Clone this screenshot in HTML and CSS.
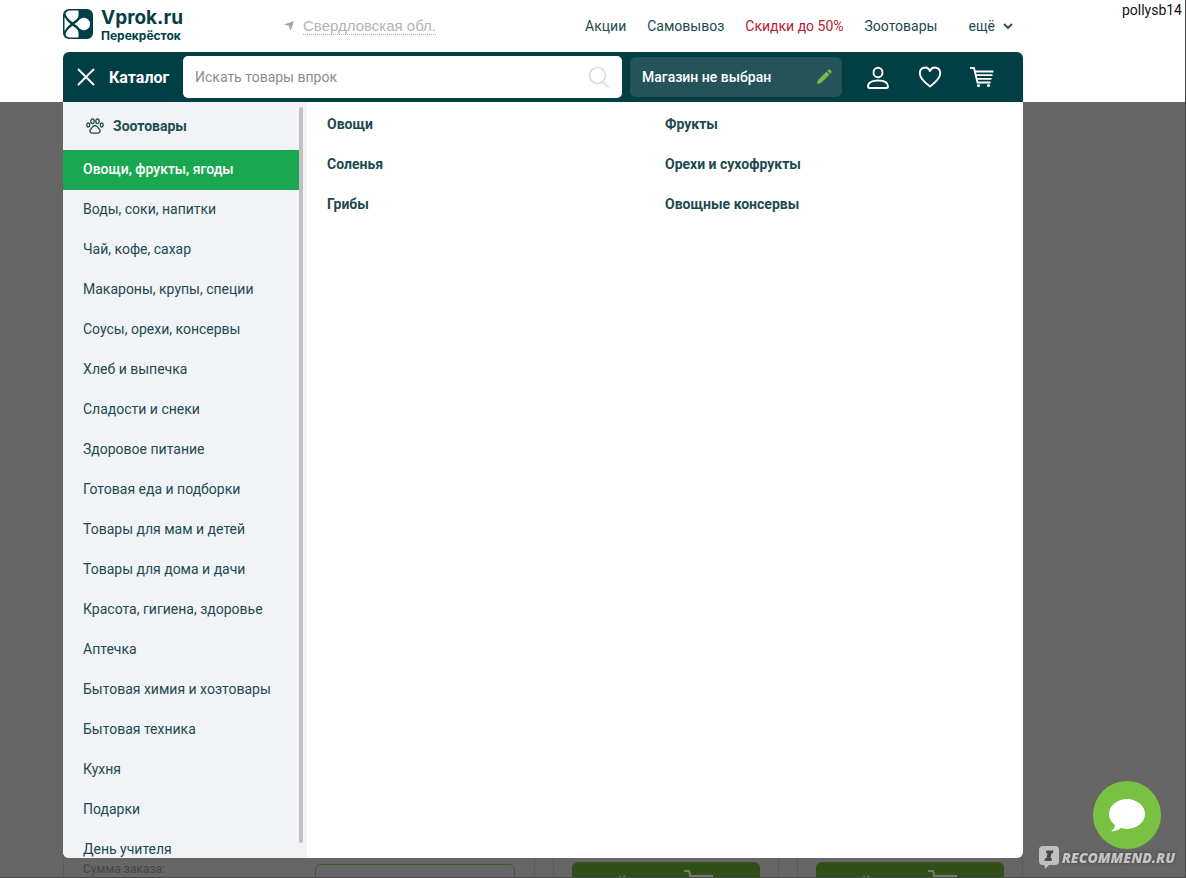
FILE: index.html
```html
<!DOCTYPE html>
<html lang="ru">
<head>
<meta charset="utf-8">
<title>Vprok.ru Перекрёсток</title>
<link rel="stylesheet" href="styles.css">
</head>
<body>
<div class="page">
  <span class="user-tag">pollysb14</span>
  <header class="header">
    <div class="topbar">
      <a class="logo" href="#">
        <svg class="logo-mark" viewBox="0 0 30 30" aria-hidden="true">
          <rect width="30" height="30" rx="6" fill="#023f45"/>
          <path d="M1.500 8Q4 12.500 7.500 15Q4 17.500 1.500 22Z" fill="#fff"/>
          <path d="M7 1.500H15.500V6Q15.500 10 9.500 13.200Q4 9.500 2.500 5Q3 1.500 7 1.500Z" fill="#fff"/>
          <path d="M7 28.500H15.500V24Q15.500 20 9.500 16.800Q4 20.500 2.500 25Q3 28.500 7 28.500Z" fill="#fff"/>
          <path d="M11.500 15Q14.500 13.500 16 11A6.300 6.300 0 1 1 16 19Q14.500 16.500 11.500 15Z" fill="#fff"/>
        </svg>
        <span class="logo-text">
          <span class="logo-name">Vprok.ru</span>
          <span class="logo-sub">Перекрёсток</span>
        </span>
      </a>
      <a class="region" href="#">
        <svg class="region-icon" viewBox="0 0 10 10" aria-hidden="true"><path d="M10 0L6.500 10L5 5L0 3.500Z" fill="#a5a5a5"/></svg>
        <span class="region-name">Свердловская обл.</span>
      </a>
      <nav class="nav">
        <a class="nav-link" href="#">Акции</a>
        <a class="nav-link" href="#">Самовывоз</a>
        <a class="nav-link nav-sale" href="#">Скидки до 50%</a>
        <a class="nav-link" href="#">Зоотовары</a>
        <button class="nav-more" type="button">ещё
          <svg class="chevron" viewBox="0 0 10 6" aria-hidden="true"><path d="M1 1L5 5L9 1" fill="none" stroke="#1d4a50" stroke-width="1.800"/></svg>
        </button>
      </nav>
    </div>
    <div class="toolbar">
      <button class="catalog-btn" type="button">
        <svg class="close-icon" viewBox="0 0 18 18" aria-hidden="true"><path d="M1.500 1.500L16.500 16.500M16.500 1.500L1.500 16.500" stroke="#fff" stroke-width="1.900" stroke-linecap="round"/></svg>
        Каталог
      </button>
      <form class="search">
        <input class="search-input" type="text" placeholder="Искать товары впрок" aria-label="Искать товары впрок">
        <button class="search-btn" type="button" aria-label="Найти">
          <svg viewBox="0 0 22 22" aria-hidden="true"><circle cx="9.500" cy="9.500" r="8" fill="none" stroke="#dcdcdc" stroke-width="1.700"/><path d="M15 16L20 21" stroke="#dcdcdc" stroke-width="1.700" stroke-linecap="round"/></svg>
        </button>
      </form>
      <button class="store" type="button">
        <span>Магазин не выбран</span>
        <svg class="pencil" viewBox="0 0 16 16" aria-hidden="true"><path d="M1 15L2 11L10.500 2.500L13.500 5.500L5 14Z M11.300 1.700L12.500 .5Q13.300 0 14 .7L15.300 2Q16 2.700 15.500 3.500L14.300 4.700Z" fill="#74bd43"/></svg>
      </button>
      <nav class="actions" aria-label="Профиль">
        <a class="action" href="#" aria-label="Личный кабинет">
          <svg viewBox="0 0 24 24" aria-hidden="true"><g fill="none" stroke="#fff" stroke-width="1.900"><ellipse cx="12" cy="7.500" rx="4.500" ry="4.800"/><path d="M3 23Q2 23 2 21.500C2 17.500 6 15.500 12 15.500S22 17.500 22 21.500Q22 23 21 23Z"/></g></svg>
        </a>
        <a class="action" href="#" aria-label="Избранное">
          <svg viewBox="0 0 24 24" aria-hidden="true"><path d="M12 21.500Q2 14 1.800 8.500C1.700 2 9.500 .5 12 6C14.500 .5 22.300 2 22.200 8.500Q22 14 12 21.500Z" fill="none" stroke="#fff" stroke-width="1.900" stroke-linejoin="round"/></svg>
        </a>
        <a class="action" href="#" aria-label="Корзина">
          <svg viewBox="0 0 24 24" aria-hidden="true"><g fill="none" stroke="#fff" stroke-width="1.800"><path d="M0 3H4L7.500 17.500H20.500"/><path d="M5 6.500H23.500M6 10.200H22.500M7 13.900H21.500"/></g><circle cx="8.500" cy="20.500" r="1.600" fill="#fff"/><circle cx="18.500" cy="20.500" r="1.600" fill="#fff"/></svg>
        </a>
      </nav>
    </div>
  </header>

  <main class="menu">
    <aside class="sidebar">
      <ul class="cat-list">
        <li><a class="cat cat-pets" href="#">
          <svg class="paw" viewBox="0 0 18 16" aria-hidden="true"><g fill="none" stroke="#1d4a50" stroke-width="1.300"><ellipse cx="6.500" cy="3.200" rx="1.700" ry="2.400"/><ellipse cx="11.500" cy="3.200" rx="1.700" ry="2.400"/><ellipse cx="2.300" cy="7" rx="1.500" ry="2"/><ellipse cx="15.700" cy="7" rx="1.500" ry="2"/><path d="M9 7.500C6.500 7.500 6 10 4.500 11.300C3 13 4.500 15.300 6.500 15.200H11.500C13.500 15.300 15 13 13.500 11.300C12 10 11.500 7.500 9 7.500Z"/></g></svg>
          Зоотовары</a></li>
        <li><a class="cat cat-active" href="#">Овощи, фрукты, ягоды</a></li>
        <li><a class="cat" href="#">Воды, соки, напитки</a></li>
        <li><a class="cat" href="#">Чай, кофе, сахар</a></li>
        <li><a class="cat" href="#">Макароны, крупы, специи</a></li>
        <li><a class="cat" href="#">Соусы, орехи, консервы</a></li>
        <li><a class="cat" href="#">Хлеб и выпечка</a></li>
        <li><a class="cat" href="#">Сладости и снеки</a></li>
        <li><a class="cat" href="#">Здоровое питание</a></li>
        <li><a class="cat" href="#">Готовая еда и подборки</a></li>
        <li><a class="cat" href="#">Товары для мам и детей</a></li>
        <li><a class="cat" href="#">Товары для дома и дачи</a></li>
        <li><a class="cat" href="#">Красота, гигиена, здоровье</a></li>
        <li><a class="cat" href="#">Аптечка</a></li>
        <li><a class="cat" href="#">Бытовая химия и хозтовары</a></li>
        <li><a class="cat" href="#">Бытовая техника</a></li>
        <li><a class="cat" href="#">Кухня</a></li>
        <li><a class="cat" href="#">Подарки</a></li>
        <li><a class="cat" href="#">День учителя</a></li>
      </ul>
      <div class="scroll-track"><div class="scroll-thumb"></div></div>
    </aside>
    <section class="subcats">
      <a class="subcat" href="#">Овощи</a>
      <a class="subcat" href="#">Фрукты</a>
      <a class="subcat" href="#">Соленья</a>
      <a class="subcat" href="#">Орехи и сухофрукты</a>
      <a class="subcat" href="#">Грибы</a>
      <a class="subcat" href="#">Овощные консервы</a>
    </section>
  </main>

  <div class="backdrop">
    <div class="card card-order"><span class="order-label">Сумма заказа:</span><div class="order-box"></div></div>
    <div class="card"><button class="buy" type="button" aria-label="В корзину">
      <svg viewBox="0 0 188 24" aria-hidden="true"><g stroke="#737b69" stroke-width="2" fill="none"><path d="M112 9H117L121 23M117 14H141"/><path d="M48 14V20M53 14L50 17"/></g></svg></button></div>
    <div class="card"><button class="buy" type="button" aria-label="В корзину">
      <svg viewBox="0 0 188 24" aria-hidden="true"><g stroke="#737b69" stroke-width="2" fill="none"><path d="M112 9H117L121 23M117 14H141"/><path d="M48 14V20M53 14L50 17"/></g></svg></button></div>
  </div>

  <button class="chat" type="button" aria-label="Чат">
    <svg viewBox="0 0 68 68" aria-hidden="true"><ellipse cx="34" cy="33" rx="18" ry="15" fill="#fff"/><path d="M22 43Q22 48 18 50Q24 51 29 46Z" fill="#fff"/></svg>
  </button>
  <div class="watermark">
    <svg class="watermark-icon" viewBox="0 0 20 23" aria-hidden="true"><path d="M4 0H16Q20 0 20 4V15Q20 19 16 19H10L6 23L5.500 19H4Q0 19 0 15V4Q0 0 4 0Z" fill="#c0c0c0"/><path d="M7.500 4.500H14.500L14 7.200H12.500L11.500 12.300H13L12.500 15H5.500L6 12.300H7.500L8.500 7.200H7Z" fill="#4a4a4a"/></svg>
    <span>RECOMMEND.RU</span>
  </div>
</div>
</body>
</html>
```
FILE: styles.css
```css
* { box-sizing: border-box; }

body {
  margin: 0;
  font-family: Roboto, "Liberation Sans", sans-serif;
  font-size: 14px;
  color: #1d4a50;
  background: #666;
}

a { color: inherit; text-decoration: none; }

button {
  padding: 0;
  border: 0;
  background: none;
  color: inherit;
  font: inherit;
  cursor: pointer;
}

svg { display: block; }

.page {
  position: relative;
  display: flex;
  flex-direction: column;
  height: 100vh;
  overflow: hidden;
  border-right: 1px solid #444;
  border-bottom: 1px solid #484848;
}

.user-tag {
  position: absolute;
  top: 0;
  right: -1px;
  padding: 0 4px;
  background: #fff;
  color: #111;
  line-height: 20px;
}

.header {
  flex: none;
  padding: 0 162px 0 63px;
  background: #fff;
}

.topbar {
  display: flex;
  align-items: center;
  height: 52px;
}

.logo {
  display: flex;
  align-items: center;
  gap: 8px;
  width: 221px;
  padding-bottom: 4px;
}

.logo-mark { width: 30px; height: 30px; }

.logo-text {
  display: flex;
  flex-direction: column;
  padding-top: 2px;
  color: #023f45;
  font-family: Inter, sans-serif;
}

.logo-name { font-size: 19px; font-weight: 700; line-height: 22px; }
.logo-sub { font-size: 12px; font-weight: 700; line-height: 14px; }

.region {
  display: flex;
  align-items: center;
  gap: 9px;
  color: #b4b4b4;
  font-family: "Liberation Sans", Arial, sans-serif;
  font-size: 15px;
  line-height: 16px;
}

.region-icon { width: 10px; height: 10px; }
.region-name { border-bottom: 1px dotted #b4b4b4; }

.nav {
  display: flex;
  align-items: center;
  gap: 21px;
  margin-left: auto;
  padding-right: 10px;
}

.nav-link, .nav-more { line-height: 20px; }
.nav-sale { color: #b5202f; }

.nav-more {
  display: flex;
  align-items: center;
  gap: 8px;
  margin-left: 10px;
}

.chevron { width: 10px; height: 6px; }

.toolbar {
  display: flex;
  align-items: center;
  height: 50px;
  padding: 4px 29px 4px 0;
  border-radius: 6px 6px 0 0;
  background: #023f45;
  color: #fff;
}

.catalog-btn {
  display: flex;
  align-items: center;
  gap: 14px;
  width: 120px;
  padding-left: 14px;
  font-size: 16px;
  font-weight: 700;
}

.close-icon { width: 18px; height: 18px; }

.search {
  display: flex;
  align-items: center;
  flex: 1;
  height: 42px;
  padding-right: 12px;
  border-radius: 5px;
  background: #fff;
}

.search-input {
  flex: 1;
  min-width: 0;
  padding: 0 12px;
  border: 0;
  outline: 0;
  background: none;
  font: inherit;
}

.search-input::placeholder { color: #8c8c8c; opacity: 1; }
.search-btn svg { width: 22px; height: 22px; }

.store {
  display: flex;
  align-items: center;
  justify-content: space-between;
  width: 212px;
  height: 40px;
  margin-left: 8px;
  padding: 0 10px 0 12px;
  border-radius: 6px;
  background: #24545a;
  font-weight: 500;
}

.pencil { width: 16px; height: 16px; }

.actions { display: flex; gap: 28px; margin-left: 24px; }
.action svg { width: 24px; height: 24px; }

.menu {
  display: flex;
  flex: 1;
  min-height: 0;
  margin: 0 162px 0 63px;
  border-radius: 0 0 6px 6px;
  overflow: hidden;
  background: #fff;
}

.sidebar {
  display: flex;
  width: 244px;
  background: #f1f3f7;
}

.cat-list {
  flex: 1;
  margin: 0;
  padding: 0;
  list-style: none;
}

.cat {
  display: block;
  height: 40px;
  padding: 0 20px;
  line-height: 38px;
}

.cat-pets {
  display: flex;
  align-items: center;
  gap: 9px;
  height: 48px;
  padding-left: 23px;
  font-weight: 700;
}

.paw { width: 18px; height: 16px; }

.cat-active {
  background: #1ba651;
  color: #fff;
  font-weight: 500;
}

.scroll-track { width: 8px; padding: 5px 4px 15px 0; }
.scroll-thumb { height: 100%; border-radius: 2px; background: #c1c1c1; }

.subcats {
  display: grid;
  flex: 1;
  grid-template-columns: 1fr 1fr;
  align-content: start;
  padding: 2px 20px;
}

.subcat { font-weight: 700; line-height: 40px; }

.backdrop {
  display: grid;
  flex: none;
  grid-template-columns: 472fr 226fr 226fr;
  gap: 18px;
  height: 19px;
  margin: 0 162px 0 63px;
  overflow: hidden;
}

.card {
  padding: 4px 18px 0;
  border: solid #5b5b5b;
  border-width: 0 1px;
}

.card-order { display: flex; justify-content: space-between; padding: 3px 19px 0; }
.order-label { color: #454545; font-size: 12px; line-height: 16px; }

.order-box {
  width: 200px;
  height: 40px;
  margin-top: 3px;
  border: 1px solid #3e5a2d;
  border-radius: 6px;
}

.buy {
  display: block;
  width: 100%;
  height: 40px;
  border-radius: 6px;
  background: #304f19;
}

.buy svg { width: 100%; height: 24px; margin-bottom: 16px; }

.chat {
  position: absolute;
  right: 24px;
  bottom: 28px;
  width: 68px;
  height: 68px;
  border-radius: 50%;
  background: #78c143;
}

.watermark {
  position: absolute;
  right: 10px;
  bottom: 8px;
  display: flex;
  align-items: center;
  gap: 3px;
  color: #c4c4c4;
  font-family: "Open Sans", sans-serif;
  font-size: 14px;
  font-style: italic;
  font-weight: 800;
  line-height: 23px;
  text-shadow: 0 0 3px #333;
}

.watermark-icon { width: 20px; height: 23px; }
```
